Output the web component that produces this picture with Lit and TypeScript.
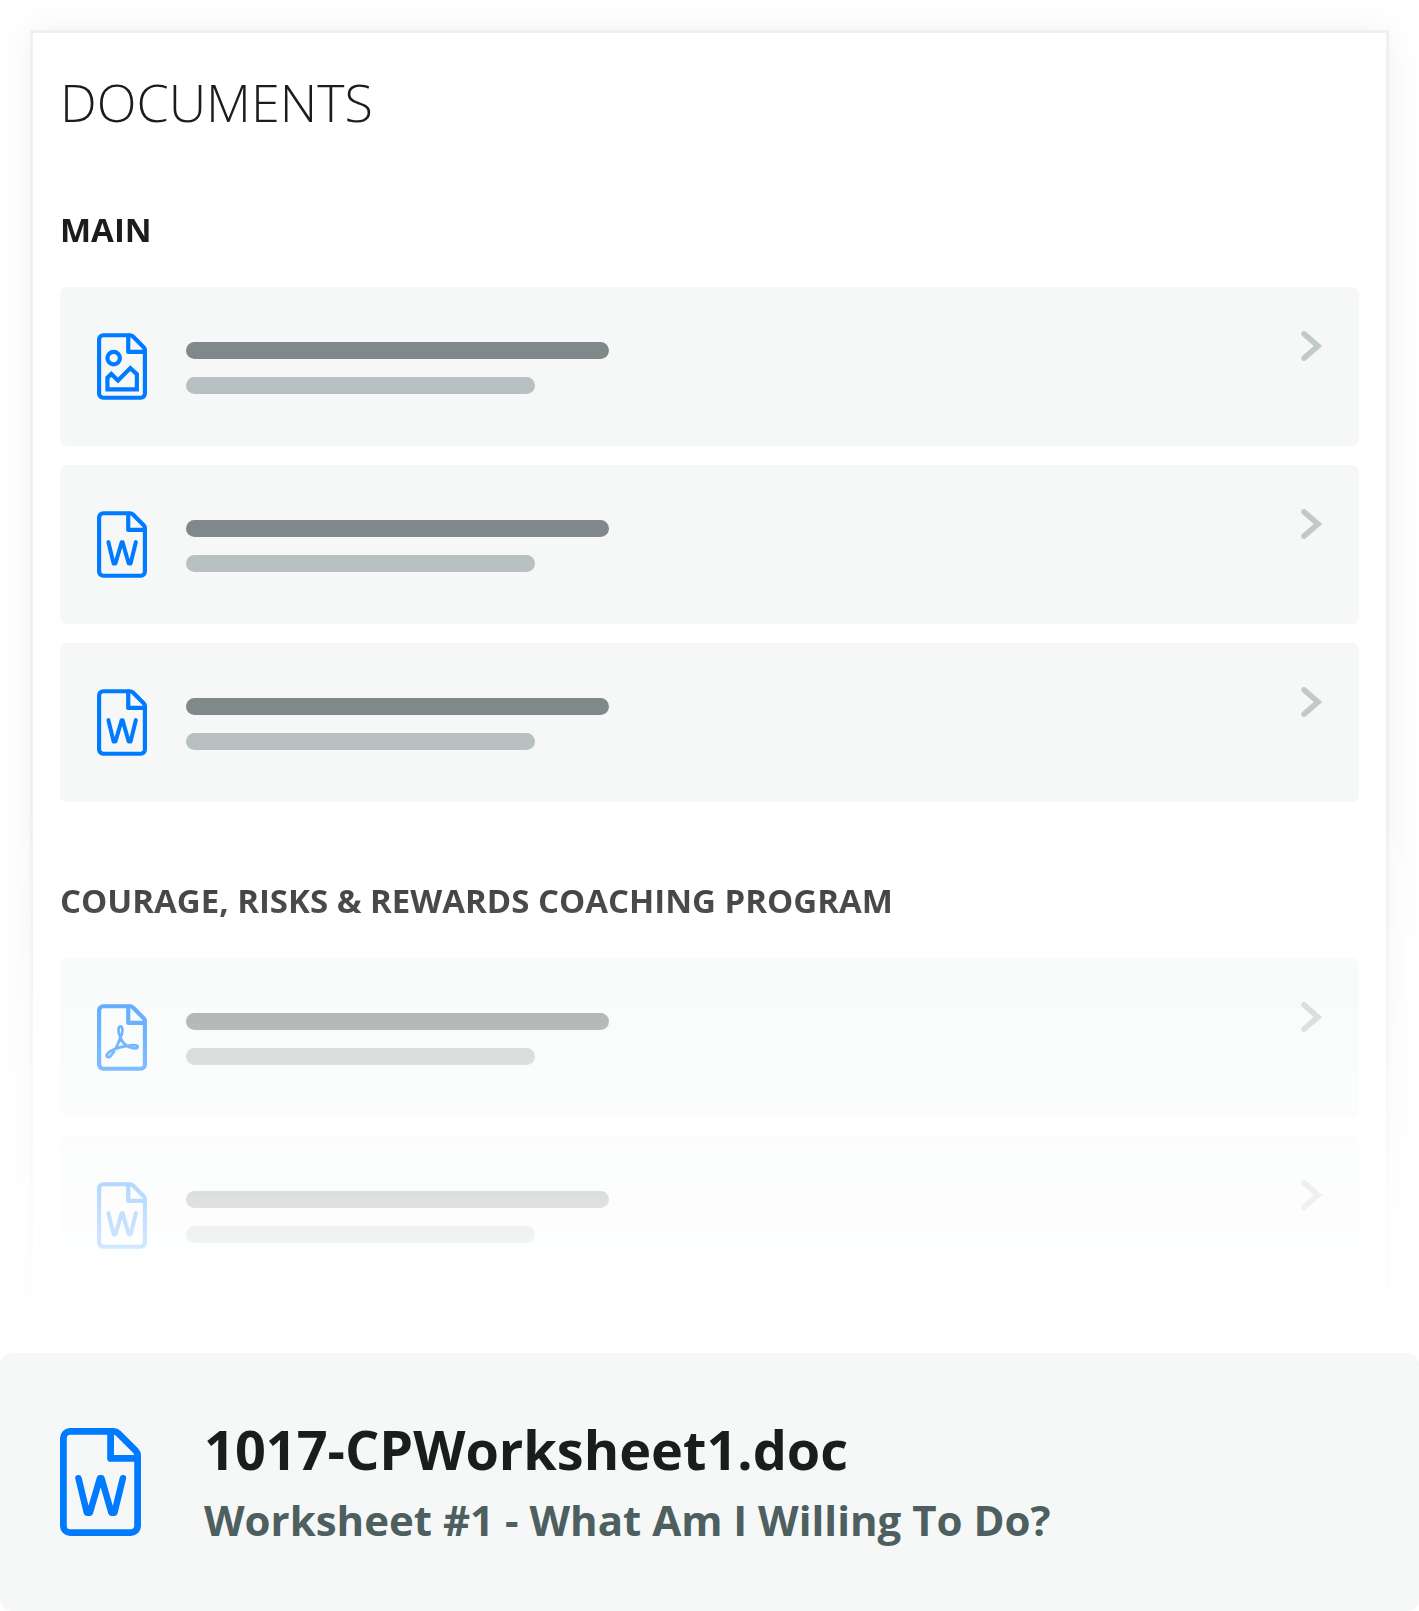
import { LitElement, html, css, svg } from "lit";
import { customElement, property } from "lit/decorators.js";

type FileKind = "image" | "word" | "pdf";

const glyphs = {
  image: svg`
    <circle cx="27" cy="40.5" r="10.1" />
    <path stroke-linejoin="miter" d="M16.9 91.1V72.1L23.2 66 34 76.6 54 56.6 64.6 66.4V91.1Z" />`,
  word: svg`
    <path stroke-width="6.5" d="M18.5 50.200 26.900 84.700H29.900L40 50.200H41.400L51.400 84.700H54.400L62.900 50.200" />`,
  pdf: svg`
    <path stroke-width="4.4" d="M38 54C34 47 33.500 36 38 36S42 47 38 54C34 65 27 79 22 84 19 87 14.500 86 15.800 82.500 18 77 30 71 44 68.500 52 66.500 66 64.500 66 69 66 73.500 56 71.500 50 68.500 44 65 40 60 38 54Z" />`,
};

@customElement("file-icon")
export class FileIcon extends LitElement {
  @property() kind: FileKind = "word";

  static styles = css`
    :host {
      display: block;
      flex: none;
      color: #007aff;
    }
    .icon {
      display: block;
      width: 100%;
      height: 100%;
    }
  `;

  render() {
    return html`<svg
      class="icon"
      viewBox="0 0 81 108"
      fill="none"
      stroke="currentColor"
      stroke-width="6.75"
      stroke-linecap="round"
      stroke-linejoin="round"
      aria-hidden="true"
    >
      <path
        d="M10.100 3.400H53.500C55.300 3.400 57 4.100 58.300 5.400L75.600 22.700C76.900 24 77.600 25.700 77.600 27.500V97.900A6.700 6.700 0 0 1 70.900 104.600H10.100A6.700 6.700 0 0 1 3.400 97.900V10.100A6.700 6.700 0 0 1 10.100 3.400Z"
      />
      <path d="M50.600 4V30.400H77" />
      ${glyphs[this.kind]}
    </svg>`;
  }
}

@customElement("document-row")
export class DocumentRow extends LitElement {
  @property() kind: FileKind = "word";

  static styles = css`
    :host {
      display: block;
    }
    .row {
      display: flex;
      align-items: flex-start;
      padding: 44px 37px 46px;
      border-radius: 7px;
      background: #f6f8f8;
    }
    .icon {
      width: 50px;
      height: 67px;
      margin-top: 2px;
    }
    .lines {
      flex: 1;
      display: grid;
      gap: 18px;
      margin: 11px 39px 0;
    }
    .line {
      height: 17px;
      border-radius: 9px;
    }
    .name {
      max-width: 423px;
      background: #818889;
    }
    .detail {
      max-width: 349px;
      background: #b8c0c1;
    }
    .chevron {
      flex: none;
      display: block;
      width: 21px;
      height: 30px;
    }
  `;

  render() {
    return html`<div class="row">
      <file-icon class="icon" kind=${this.kind}></file-icon>
      <div class="lines">
        <div class="line name"></div>
        <div class="line detail"></div>
      </div>
      <svg class="chevron" viewBox="0 0 21 30" fill="none" stroke="#c2c9c9" stroke-width="5.6" aria-hidden="true">
        <path stroke-linecap="round" stroke-linejoin="miter" d="M3 2.900 16.900 15 3 27.100" />
      </svg>
    </div>`;
  }
}

const sections: { title: string; files: FileKind[] }[] = [
  { title: "MAIN", files: ["image", "word", "word"] },
  { title: "COURAGE, RISKS & REWARDS COACHING PROGRAM", files: ["pdf", "word", "word"] },
];

@customElement("app-root")
export class AppRoot extends LitElement {
  static styles = css`
    :host {
      display: block;
      background: #fff;
      color: #1a1c1d;
      font-family: "Open Sans", sans-serif;
    }
    .preview {
      box-sizing: border-box;
      height: 1319px;
      padding: 30px 30px 0;
      overflow: hidden;
      mask-image: linear-gradient(#000 60%, rgba(0, 0, 0, 0.05));
    }
    .panel {
      padding: 40px 27px;
      border: 3px solid #f1f0f0;
      background: #fff;
      box-shadow: 0 0 36px rgba(20, 40, 34, 0.06);
    }
    .title {
      margin: 0;
      font-size: 52px;
      font-weight: 300;
      line-height: 58px;
    }
    .section {
      padding-top: 75px;
    }
    .heading {
      margin: 0 0 34px;
      font-size: 33px;
      font-weight: 700;
      line-height: 47px;
    }
    .rows {
      display: grid;
      gap: 19px;
    }
    .file {
      display: flex;
      align-items: center;
      gap: 63px;
      margin-top: 34px;
      padding: 58px 60px 59px;
      border-radius: 12px;
      background: #f6f8f8;
    }
    .file-icon {
      width: 81px;
      height: 108px;
    }
    .file-name {
      margin: 0;
      font-size: 54px;
      font-weight: 700;
      line-height: 76px;
    }
    .file-note {
      margin: 0;
      color: #4d5f5f;
      font-size: 42px;
      font-weight: 700;
      line-height: 65px;
    }
  `;

  render() {
    return html`
      <main>
        <div class="preview">
          <div class="panel">
            <h1 class="title">DOCUMENTS</h1>
            ${sections.map(
              (s) => html`<section class="section">
                <h2 class="heading">${s.title}</h2>
                <div class="rows">
                  ${s.files.map((kind) => html`<document-row kind=${kind}></document-row>`)}
                </div>
              </section>`
            )}
          </div>
        </div>
        <article class="file">
          <file-icon class="file-icon" kind="word"></file-icon>
          <div>
            <h2 class="file-name">1017-CPWorksheet1.doc</h2>
            <p class="file-note">Worksheet #1 - What Am I Willing To Do?</p>
          </div>
        </article>
      </main>
    `;
  }
}
